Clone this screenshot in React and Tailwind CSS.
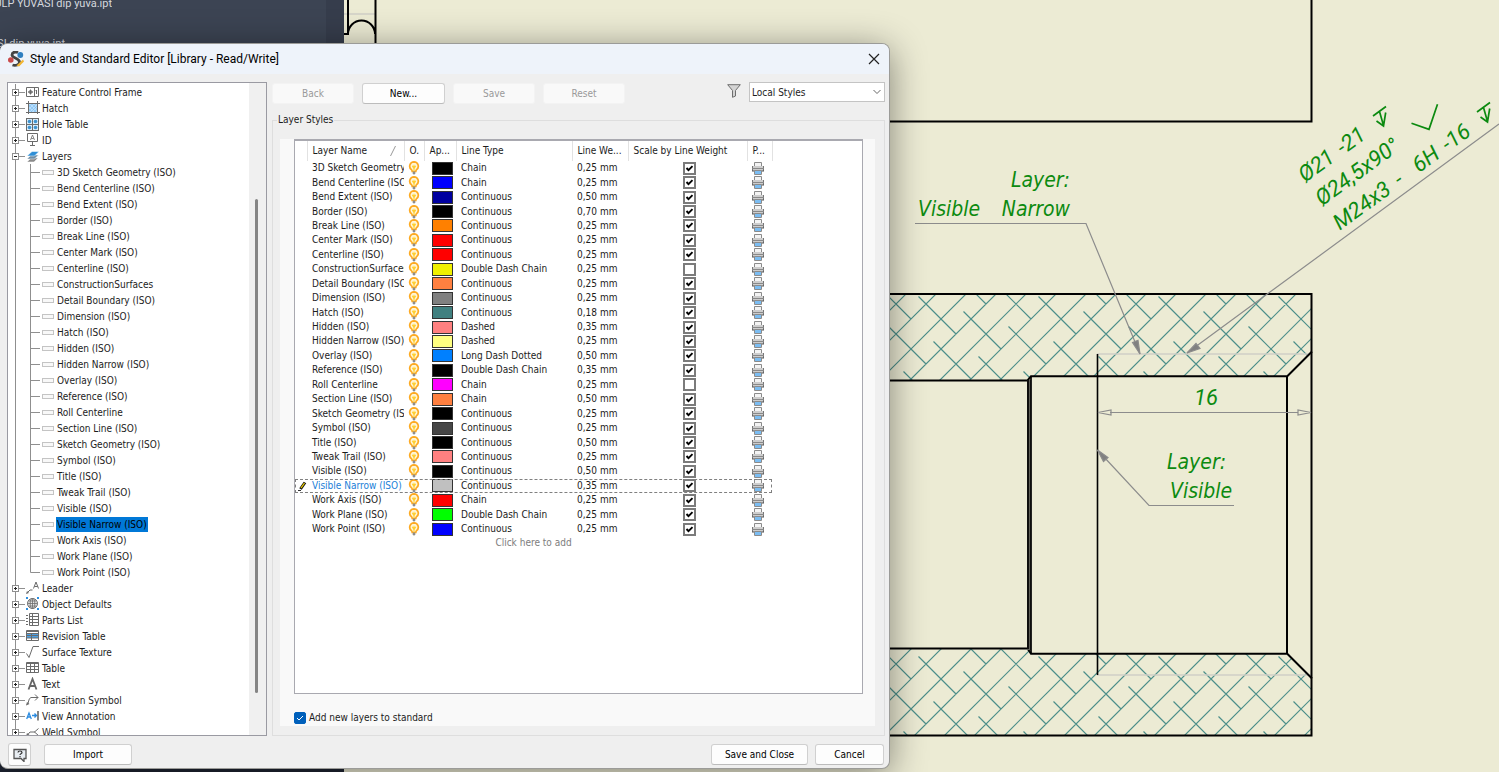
import React from 'react';

const LAYERS = [
  ['3D Sketch Geometry (ISO)', 'bg-black', 'Chain', '0,25', true],
  ['Bend Centerline (ISO)', 'bg-[#0000ff]', 'Chain', '0,25', true],
  ['Bend Extent (ISO)', 'bg-[#0000a0]', 'Continuous', '0,50', true],
  ['Border (ISO)', 'bg-black', 'Continuous', '0,70', true],
  ['Break Line (ISO)', 'bg-[#ff8000]', 'Continuous', '0,25', true],
  ['Center Mark (ISO)', 'bg-[#ff0000]', 'Continuous', '0,25', true],
  ['Centerline (ISO)', 'bg-[#ff0000]', 'Continuous', '0,25', true],
  ['ConstructionSurfaces', 'bg-[#f0f000]', 'Double Dash Chain', '0,25', false],
  ['Detail Boundary (ISO)', 'bg-[#ff8040]', 'Continuous', '0,25', true],
  ['Dimension (ISO)', 'bg-[#808080]', 'Continuous', '0,25', true],
  ['Hatch (ISO)', 'bg-[#408080]', 'Continuous', '0,18', true],
  ['Hidden (ISO)', 'bg-[#ff8080]', 'Dashed', '0,35', true],
  ['Hidden Narrow (ISO)', 'bg-[#ffff80]', 'Dashed', '0,25', true],
  ['Overlay (ISO)', 'bg-[#0080ff]', 'Long Dash Dotted', '0,50', true],
  ['Reference (ISO)', 'bg-black', 'Double Dash Chain', '0,35', true],
  ['Roll Centerline', 'bg-[#ff00ff]', 'Chain', '0,25', false],
  ['Section Line (ISO)', 'bg-[#ff8040]', 'Chain', '0,50', true],
  ['Sketch Geometry (ISO)', 'bg-black', 'Continuous', '0,25', true],
  ['Symbol (ISO)', 'bg-[#464646]', 'Continuous', '0,25', true],
  ['Title (ISO)', 'bg-black', 'Continuous', '0,50', true],
  ['Tweak Trail (ISO)', 'bg-[#ff8080]', 'Continuous', '0,25', true],
  ['Visible (ISO)', 'bg-black', 'Continuous', '0,50', true],
  ['Visible Narrow (ISO)', 'bg-[#c0c0c0]', 'Continuous', '0,35', true],
  ['Work Axis (ISO)', 'bg-[#ff0000]', 'Chain', '0,25', true],
  ['Work Plane (ISO)', 'bg-[#00ff00]', 'Double Dash Chain', '0,25', true],
  ['Work Point (ISO)', 'bg-[#0000ff]', 'Continuous', '0,25', true],
];
const ACTIVE = 'Visible Narrow (ISO)';

const g = '#6b6b6b';
const ICONS = {
  frame: (
    <g fill="none" stroke={g}>
      <path d="M.5 2.5h12v9H.5zM8.5 2.5v9" />
      <path d="M2 7h5M4.500 4.500v5M3 7a1.500 1.500 0 1 0 3 0a1.500 1.500 0 1 0-3 0M10.500 5v4M9.500 5.500h1" />
    </g>
  ),
  hatch: (
    <g fill="none" stroke={g}>
      <rect x="3" y="3" width="8" height="8" fill="#b9defb" stroke="none" />
      <path d="M3 6l3-3M3 10l7-7M5 11l6-6M8 11l3-3M3 8l3 3M3 4l7 7M6 3l5 5" stroke="#6db6f0" strokeWidth=".5" />
      <path d="M2.500 0v13M11.500 0v13M0 2.500h14M0 11.500h14" />
    </g>
  ),
  hole: (
    <g fill="none" stroke={g}>
      <rect x=".5" y="1.500" width="12" height="12" fill="#d9ecfa" />
      <path d="M6.500 1.500v12M.5 7.500h12" />
      <g fill="#3e93cf" stroke="none">
        <circle cx="3.500" cy="4.500" r="1.800" /><circle cx="9.500" cy="4.500" r="1.800" />
        <circle cx="3.500" cy="10.500" r="1.800" /><circle cx="9.500" cy="10.500" r="1.800" />
      </g>
    </g>
  ),
  id: (
    <g fill="none" stroke={g}>
      <path d="M1.500 .5h10v8h-10zM6.500 8.500v4M4 12.500h5" />
      <path d="M4.500 7l2-5l2 5M5.300 5.500h2.400" strokeWidth=".8" />
    </g>
  ),
  layers: (
    <g stroke="#fff" strokeWidth=".5">
      <path d="M1 13l4-4h7l-4 4z" fill="#8a8a8a" />
      <path d="M1 10l4-4h7.500l-4 4z" fill="#6f8ea6" />
      <path d="M1 7l5-4.500h7L8.500 7z" fill="#2f8fd6" />
    </g>
  ),
  leader: (
    <g fill="none" stroke={g}>
      <path d="M1 12l3-3h2.500" /><path d="M0 13l1-3l2 2z" fill={g} stroke="none" />
      <path d="M7.500 7.500l2.500-6.500l2.500 6.500M8.300 5.500h3.400" />
    </g>
  ),
  defaults: (
    <g fill="none" stroke={g}>
      <circle cx="6.500" cy="6.500" r="5" fill="#e4e4e4" />
      <ellipse cx="6.500" cy="6.500" rx="2.300" ry="5" strokeWidth=".8" />
      <path d="M1.500 6.500h10M2.500 4h8M2.500 9h8M6.500 1.500v10" strokeWidth=".8" />
      <path d="M0 0h2v2H0zM11 0h2v2h-2zM0 11h2v2H0zM11 11h2v2h-2z" fill="#2f8fe0" stroke="none" />
    </g>
  ),
  parts: (
    <g fill="none" stroke={g}>
      <path d="M3.500 .5h9v12h-9zM3.500 3.500h9M3.500 6.500h9M3.500 9.500h9M6.500 .5v12" />
      <path d="M0 2.500h2M0 5.500h2M0 8.500h2M0 11.500h2" />
    </g>
  ),
  revision: (
    <g fill="none" stroke={g}>
      <path d="M.5 1.500h12v10H.5z" /><rect x="1" y="5" width="11" height="4" fill="#4aa0e4" stroke="none" />
      <path d="M.5 2.500h12M.5 4.500h12M.5 6.500h12M.5 9h12M5.500 4v7.500" />
    </g>
  ),
  surface: <path d="M.5 8.500l2.500 4l4-11h6" fill="none" stroke={g} />,
  table: (
    <g fill="none" stroke={g}>
      <path d="M.5 1.500h12v10H.5zM.5 5.500h12M.5 8.500h12M4.500 3v8.500M8.500 3v8.500" /><path d="M.5 2.500h12" />
    </g>
  ),
  text: <path d="M2.500 12.500L6.500 2l4 10.500M4 9h5" fill="none" stroke="#666" strokeWidth="1.800" />,
  transition: (
    <g fill="none" stroke={g}>
      <path d="M1 11.500C3 11 2 5 5 4.500h7M9 1.500l3 3l-3 3" /><path d="M0 12.500l1-3.500l2.500 2z" fill={g} stroke="none" />
    </g>
  ),
  view: (
    <g fill="none">
      <path d="M.7 10L3 4l2.300 6M1.500 8h3M6 6.500h4M8.500 4.500l2 2l-2 2" stroke="#2b8be0" strokeWidth="1.300" />
      <path d="M12 2v9.500" stroke="#444" strokeWidth="1.300" />
    </g>
  ),
  weld: (
    <g fill="none" stroke={g}>
      <path d="M1 10.500l3-3.500h5M12.500 3.500l-4 3.500l4 3.500" /><path d="M0 11.500l1-3.500l2.500 2z" fill={g} stroke="none" />
    </g>
  ),
};

const TOP = [['frame', 'Feature Control Frame'], ['hatch', 'Hatch'], ['hole', 'Hole Table'], ['id', 'ID'], ['layers', 'Layers']];
const BOTTOM = [
  ['leader', 'Leader'], ['defaults', 'Object Defaults'], ['parts', 'Parts List'], ['revision', 'Revision Table'],
  ['surface', 'Surface Texture'], ['table', 'Table'], ['text', 'Text'], ['transition', 'Transition Symbol'],
  ['view', 'View Annotation'], ['weld', 'Weld Symbol'],
];

function Branch({ icon, label }) {
  const open = icon === 'layers';
  return (
    <li className="flex h-4 items-center">
      <svg className="h-4 w-[18px] shrink-0" viewBox="0 0 18 16" fill="none" stroke="#8f8f8f">
        <path d="M7.500 0v16M11 8.500h6" />
        <rect x="4.500" y="5.500" width="6" height="6" fill="#fff" />
        <path d={open ? 'M6 8.500h3' : 'M6 8.500h3M7.500 7v3'} stroke="#222" />
      </svg>
      <svg className="h-[14px] w-[14px] shrink-0" viewBox="0 0 14 14">{ICONS[icon]}</svg>
      <span className="pl-[2px]">{label}</span>
    </li>
  );
}

function Leaf({ label, last }) {
  const on = label === ACTIVE;
  return (
    <li className="flex h-4 items-center">
      <svg className="h-4 w-[48px] shrink-0" viewBox="0 0 48 16" fill="none" stroke="#8f8f8f">
        <path d={last ? 'M7.500 0v16M22.500 0v8.500H32' : 'M7.500 0v16M22.500 0v16M22.500 8.500H32'} />
        <rect x="34.500" y="6.500" width="11" height="4" fill="#f8f8f8" stroke="#c4c4c4" />
      </svg>
      <span className={on ? 'bg-[#0078d7] px-px leading-[15px] text-black' : 'px-px leading-[15px]'}>{label}</span>
    </li>
  );
}

function Bulb() {
  return (
    <svg className="block h-[14px] w-3" viewBox="0 0 12 14">
      <path d="M6 .9a4.300 4.300 0 0 0-2.600 7.700C4 9.200 4.200 10 4.200 10.500h3.600c0-.5.2-1.300.8-1.900A4.300 4.300 0 0 0 6 .9z" fill="#fff6d8" stroke="#fdaa22" strokeWidth="1.700" />
      <path d="M4.300 4.800l1 1.700L6 4.800l.7 1.700l1-1.700M6 6v4" stroke="#ffcf30" strokeWidth="1.100" fill="none" />
      <path d="M4.700 10.500h2.600V12.500L6.500 13.500h-1L4.700 12.500z" fill="#8d8d8d" />
    </svg>
  );
}

function Printer() {
  return (
    <svg className="block h-[13px] w-[14px]" viewBox="0 0 14 13">
      <path d="M3.500.5h7v4h-7z" fill="#f4f4f4" stroke="#8b8b8b" />
      <path d="M1 4h12v5H1z" fill="#cdcdcd" />
      <path d="M1.500 4v5M12.500 4v5" stroke="#777" />
      <path d="M1 6.500h12" stroke="#888" />
      <path d="M1 9h12" stroke="#555" />
      <path d="M3.500 8.500h7v4h-7z" fill="#fff" stroke="#8b8b8b" />
      <path d="M4 9h6v3H4z" fill="#7cbdf2" />
    </svg>
  );
}

function LayerRow({ row }) {
  const [name, color, type, weight, scale] = row;
  const on = name === ACTIVE;
  return (
    <tr className={on ? 'outline outline-1 -outline-offset-1 outline-dashed outline-[#808080]' : ''}>
      <td className="p-0">
        {on && (
          <svg className="ml-[3px] block h-[10px] w-[9px]" viewBox="0 0 9 10">
            <path d="M2.500 8L7 1.500" stroke="#111" strokeWidth="3" /><path d="M3 7l3.500-5" stroke="#f0d000" strokeWidth="1.300" />
            <path d="M0 9.500h3" stroke="#333" />
          </svg>
        )}
      </td>
      <td className={on ? 'overflow-hidden p-0 pl-[5px] text-[#1a80d8]' : 'overflow-hidden p-0 pl-[5px]'}>{name}</td>
      <td className="p-0 pl-1"><button type="button" aria-label={name + ' visible'} className="block"><Bulb /></button></td>
      <td className="p-0 pl-[8px]"><button type="button" aria-label={name + ' color'} className={'block h-[13px] w-[21px] border border-[#333] ' + color} /></td>
      <td className="p-0 pl-[5px]">{type}</td>
      <td className="p-0 pl-[5px]">{weight} mm</td>
      <td className="p-0 pl-[55px]">
        <label className="grid h-[13px] w-[13px]">
          <input type="checkbox" defaultChecked={scale} aria-label={name + ' scale by line weight'} className="peer col-start-1 row-start-1 h-[13px] w-[13px] appearance-none border-2 border-[#7b7b7b] bg-white" />
          <svg className="pointer-events-none col-start-1 row-start-1 hidden h-[13px] w-[13px] peer-checked:block" viewBox="0 0 13 13">
            <path d="M3.500 6l2 2.200l4-4" fill="none" stroke="#000" strokeWidth="1.900" />
          </svg>
        </label>
      </td>
      <td className="p-0 pl-1"><button type="button" aria-label={name + ' plot'} className="block"><Printer /></button></td>
    </tr>
  );
}

/* Continuous 45° lines, 30 apart, crossed by staggered short strokes. */
const hatchLines = [];
for (let s = 1170; s < 2060; s += 30) hatchLines.push(`M${s - 280} 280L${s - 740} 740`);
for (let i = -10; i < 22; i++) {
  for (let j = -10; j < 22; j++) {
    const x = 918.5 + 45 * i + 15 * j;
    const y = 296.5 + 15 * i + 45 * j;
    if (x > 840 && x < 1320 && y > 250 && y < 740) hatchLines.push(`M${x} ${y}l37.500 37.500`);
  }
}

function Drawing() {
  return (
    <svg className="absolute inset-0 h-full w-full" viewBox="0 0 1499 772" preserveAspectRatio="xMinYMin slice" fill="none">
      <clipPath id="section">
        <path d="M880 294H1312V351L1287 376H1031L1027 381H880zM880 648H1027L1031 654H1287L1312 679V736H880z" />
      </clipPath>
      <path clipPath="url(#section)" d={hatchLines.join('')} stroke="#4d8f8a" strokeWidth="1.200" />
      <path d="M344 14h31M1097 354h214M1097 675h214" stroke="#cfcfc6" strokeWidth="1.500" />
      <g stroke="#000" strokeWidth="2">
        <path d="M344 34h4V0M348 34a13.500 13.500 0 0 1 27 0M375.500 0v60" />
        <path d="M880 121.500h431.500V0" />
        <path d="M880 294h431.500v441.500H880" />
        <path d="M880 380.500h147.500l3.500-4.200h256M1287 376.500l25-25M880 648.500h147.500l3.500 5.200h256M1287 653.500l25 25M1287 376v278" />
        <path d="M1097.500 354v321" strokeWidth="1.600" />
      </g>
      <path d="M1029 380v270" stroke="#5f5f58" strokeWidth="4" />
      <path d="M1028 380v269M1031 376v278" stroke="#000" strokeWidth="1.700" />
      <g stroke="#8c8c8c" strokeWidth="1.200">
        <path d="M915 223.500h171L1140 354M1499 124L1187 353M1097.500 450L1149 505.500h85M1110 412.500h188" />
        <path d="M1098 412.500l13-2.500v5zM1311 412.500l-13-2.500v5z" />
        <path d="M1140 354l-7.500-11.500l5.500-2.200zM1187 353l9-9.500l4 5zM1097.500 450l10.500 7.500l-4.500 4z" fill="#808080" />
      </g>
      <g fill="#0c8a10" fontFamily="'DejaVu Sans Condensed', 'DejaVu Sans', sans-serif" fontStyle="italic" fontSize="21">
        <text x="1070" y="187" textAnchor="end">Layer:</text>
        <text x="918" y="216">Visible</text>
        <text x="1070" y="216" textAnchor="end">Narrow</text>
        <text x="1167" y="469">Layer:</text>
        <text x="1170" y="498">Visible</text>
        <g fontFamily="Roboto, sans-serif" fontSize="22">
          <text x="1206" y="405" textAnchor="middle">16</text>
          <g transform="translate(1305 183) rotate(-36)">
            <text y="0">Ø21</text><text x="47" y="0">-21</text>
            <text y="29">Ø24,5x90°</text>
            <text y="59">M24x3</text><text x="75" y="59">-</text><text x="98" y="59">6H</text><text x="134" y="59">-16</text>
          </g>
        </g>
      </g>
      <g stroke="#0c8a10" strokeWidth="1.700">
        <path id="depth" d="M1373 116l13-9.500M1379.500 111.500l4 14M1376.500 121l7 5l2.200-13.500" />
        <use href="#depth" x="104" y="-4" />
        <path d="M1411.500 123.300l17.500 6l8.500-25" />
      </g>
    </svg>
  );
}

const enabled = 'flex items-center justify-center rounded-[3px] border border-[#d0d0d0] border-b-[#bcbcbc] bg-[#fdfdfd] text-black';
const disabled = 'flex items-center justify-center rounded-[3px] border border-[#f3f3f3] bg-[#f9f9f9] text-[#9a9a9a]';
const th = 'overflow-hidden border-r border-[#e2e2e2] p-0 pl-[5px] text-left font-normal';

export default function App() {
  return (
    <main className="relative h-screen w-full overflow-hidden bg-[#ecebd4] font-['DejaVu_Sans_Condensed','DejaVu_Sans',sans-serif] text-[10px] text-[#1c1c1c]">
      <Drawing />
      <aside className="relative h-full w-[344px] bg-[#1f2533]">
        <div className="flex h-[60px] flex-col gap-[26px] border-r-[18px] border-[#363d4c] bg-[#3c4453] font-[Roboto,sans-serif] text-[11px] leading-[14px] text-[#d5d8de]">
          <p className="-mt-[3px] flex w-[112px] justify-end overflow-hidden whitespace-nowrap">KULP YUVASI dip yuva.ipt</p>
          <p className="flex w-[65px] justify-end overflow-hidden whitespace-nowrap">KULP YUVASI dip yuva.ipt</p>
        </div>
      </aside>

      <section role="dialog" aria-label="Style and Standard Editor" className="absolute bottom-[3px] left-0 top-[43px] flex w-[890px] flex-col overflow-hidden rounded-lg border border-l-0 border-[#9b9b98] bg-[#efefef] shadow-[0_6px_36px_rgba(0,0,0,0.45)]">
        <header className="flex h-[30px] shrink-0 items-center bg-[#eef3fa] pl-2 pr-[9px]">
          <svg className="h-4 w-4" viewBox="0 0 16 16">
            <path d="M10 1.500C7 .3 4 1.500 4 4c0 3 7.500 3 7.500 7c0 3-4 4-7 3" fill="none" stroke="#444" strokeWidth="2.800" />
            <circle cx="12.300" cy="4" r="2.900" fill="#2f7fc0" /><circle cx="2.800" cy="9" r="2.800" fill="#c94a4a" />
            <path d="M8.500 14.500L15 8.500l1 2l-5 5z" fill="#f2b632" />
          </svg>
          <h1 className="flex-1 pl-[6px] font-[Roboto,sans-serif] text-[12px] font-normal text-black">Style and Standard Editor [Library - Read/Write]</h1>
          <button type="button" aria-label="Close">
            <svg className="h-3 w-3" viewBox="0 0 12 12"><path d="M1 1l10 10M11 1L1 11" stroke="#222" strokeWidth="1.200" /></svg>
          </button>
        </header>

        <div className="flex min-h-0 flex-1 gap-[5px] pl-[7px] pr-1 pt-2">
          <nav aria-label="Styles" className="flex w-[260px] shrink-0 overflow-hidden border border-[#9a9aa2] bg-white">
            <ul className="min-w-0 flex-1 whitespace-nowrap pt-px">
              {TOP.map(([i, l]) => <Branch key={l} icon={i} label={l} />)}
              {LAYERS.map(([l], i) => <Leaf key={l} label={l} last={i === LAYERS.length - 1} />)}
              {BOTTOM.map(([i, l]) => <Branch key={l} icon={i} label={l} />)}
            </ul>
            <div className="w-[17px] bg-[#f0f0f0] pl-[6px] pt-[116px]"><div className="h-[494px] w-[3px] rounded bg-[#858585]" /></div>
          </nav>

          <div className="flex min-w-0 flex-1 flex-col">
            <div className="flex items-start">
              <div className="flex flex-1 gap-2 pt-px">
                <button type="button" disabled className={disabled + ' h-[21px] w-[82px]'}>Back</button>
                <button type="button" className={enabled + ' h-[21px] w-[83px]'}>New...</button>
                <button type="button" disabled className={disabled + ' h-[21px] w-[82px]'}>Save</button>
                <button type="button" disabled className={disabled + ' h-[21px] w-[82px]'}>Reset</button>
              </div>
              <svg className="mr-2 mt-[2px] h-[14px] w-[14px]" viewBox="0 0 14 14">
                <path d="M.7.700h12.600L8.500 6.500v5.500l-3 1.300V6.500z" fill="#d4d4d4" stroke="#6e6e6e" />
              </svg>
              <div className="grid w-[136px] items-center">
                <select aria-label="Style filter" className="col-start-1 row-start-1 h-5 w-full appearance-none border border-[#c4c4c4] bg-white px-[2px]"><option>Local Styles</option></select>
                <svg className="pointer-events-none col-start-1 row-start-1 mr-1 h-2 w-2 justify-self-end" viewBox="0 0 8 8"><path d="M.5 2l3.500 3.500L7.500 2" fill="none" stroke="#666" /></svg>
              </div>
            </div>

            <fieldset className="mt-[9px] flex min-h-0 flex-1 flex-col border border-[#dedede] pb-[9px] pl-[7px] pr-[9px]">
              <legend className="-ml-[3px] px-px leading-[14px]">Layer Styles</legend>
              <div className="mt-[12px] flex min-h-0 flex-1 flex-col bg-[#f9f9f9] pl-[14px] pr-[12px]">
                <div className="min-h-0 flex-1 border border-t-2 border-[#a9a9b0] bg-white">
                  <table className="h-[408px] w-[477px] table-fixed border-collapse whitespace-nowrap leading-[12px]">
                    <colgroup>
                      <col className="w-3" /><col className="w-[97px]" /><col className="w-[20px]" /><col className="w-8" />
                      <col className="w-[116px]" /><col className="w-[56px]" /><col className="w-[119px]" /><col className="w-[25px]" />
                    </colgroup>
                    <thead>
                      <tr className="h-5">
                        <th className={th} aria-label="State" />
                        <th className={th}>
                          <span className="flex justify-between pr-2">Layer Name
                            <svg className="h-3 w-[6px]" viewBox="0 0 6 12"><path d="M.5 11l5-10" stroke="#999" /></svg>
                          </span>
                        </th>
                        <th className={th}>O.</th><th className={th}>Ap...</th><th className={th}>Line Type</th>
                        <th className={th}>Line We...</th><th className={th}>Scale by Line Weight</th><th className={th}>P...</th>
                      </tr>
                    </thead>
                    <tbody>
                      {LAYERS.map((r) => <LayerRow key={r[0]} row={r} />)}
                      <tr><td colSpan={8} className="p-0 text-center text-[#7d7d7d]">Click here to add</td></tr>
                    </tbody>
                  </table>
                </div>
                <label className="mb-[2px] mt-[17px] flex h-[13px] items-center gap-[3px]">
                  <span className="grid h-3 w-3">
                    <input type="checkbox" defaultChecked className="peer col-start-1 row-start-1 h-3 w-3 appearance-none rounded-[2px] border border-[#0060bb] checked:bg-[#0060bb]" />
                    <svg className="pointer-events-none col-start-1 row-start-1 hidden h-3 w-3 peer-checked:block" viewBox="0 0 12 12"><path d="M3 6l2 2l4-4" fill="none" stroke="#fff" /></svg>
                  </span>
                  Add new layers to standard
                </label>
              </div>
            </fieldset>
          </div>
        </div>

        <footer className="flex shrink-0 items-center pb-[2px] pl-2 pr-[5px] pt-[7px]">
          <button type="button" aria-label="Help" className={enabled + ' h-[23px] w-[23px]'}>
            <svg className="h-[14px] w-[14px]" viewBox="0 0 14 14" fill="none">
              <path d="M1 1.500h12v9h-2v3l-3-3H1z" fill="#e8edf2" stroke="#555" strokeWidth="1.300" />
              <path d="M5 4.500c0-2 4-2 4 0C9 6 7 5.500 7 7M7 8v1.300" stroke="#333" strokeWidth="1.200" />
            </svg>
          </button>
          <button type="button" className={enabled + ' ml-[13px] h-[21px] w-[88px]'}>Import</button>
          <button type="button" className={enabled + ' ml-auto h-[21px] w-[97px]'}>Save and Close</button>
          <button type="button" className={enabled + ' ml-[7px] h-[21px] w-[69px]'}>Cancel</button>
        </footer>
      </section>
    </main>
  );
}
